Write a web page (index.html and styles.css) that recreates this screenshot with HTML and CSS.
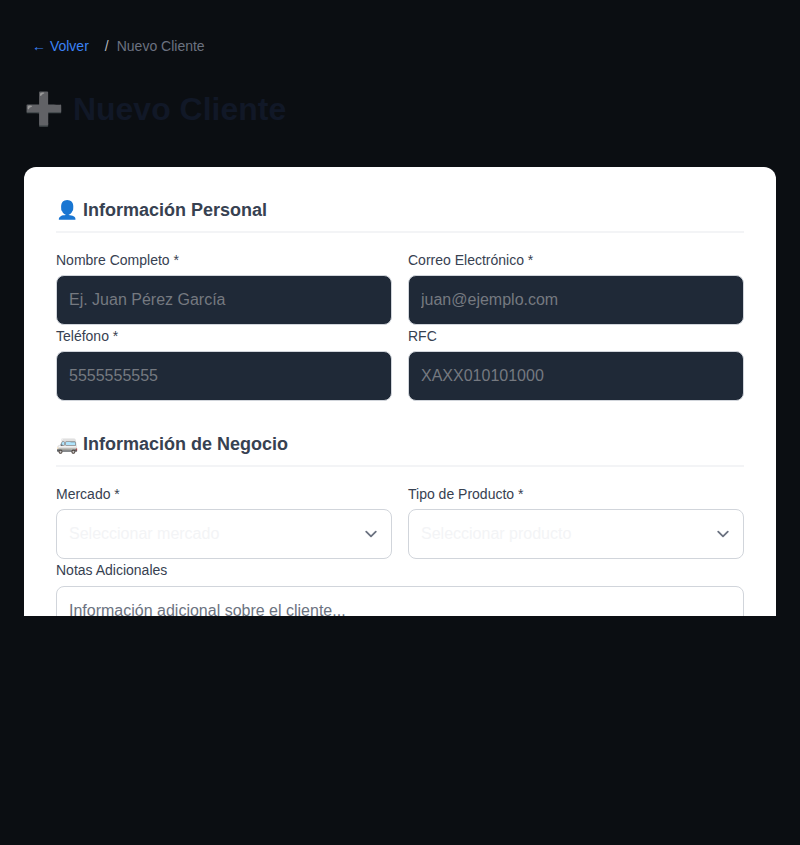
FILE: index.html
```html
<!DOCTYPE html>
<html lang="es">
<head>
<meta charset="utf-8">
<title>Nuevo Cliente</title>
<link rel="stylesheet" href="styles.css">
</head>
<body>
<main class="page">
  <nav class="crumbs"><a class="back">← Volver</a><span class="sep">/</span><span class="current">Nuevo Cliente</span></nav>
  <h1 class="title">➕ Nuevo Cliente</h1>
  <form class="card">
    <section class="section">
      <h2 class="heading">👤 Información Personal</h2>
      <div class="grid">
        <label class="field">Nombre Completo *<input class="control dark" placeholder="Ej. Juan Pérez García"></label>
        <label class="field">Correo Electrónico *<input class="control dark" placeholder="juan@ejemplo.com"></label>
        <label class="field">Teléfono *<input class="control dark" placeholder="5555555555"></label>
        <label class="field">RFC<input class="control dark" placeholder="XAXX010101000"></label>
      </div>
    </section>
    <section class="section">
      <h2 class="heading">🚐 Información de Negocio</h2>
      <div class="grid">
        <div class="field">Mercado *<div class="control select"><span>Seleccionar mercado</span><svg class="chevron" viewBox="0 0 20 20"><path d="M6 8l4 4 4-4"/></svg></div></div>
        <div class="field">Tipo de Producto *<div class="control select"><span>Seleccionar producto</span><svg class="chevron" viewBox="0 0 20 20"><path d="M6 8l4 4 4-4"/></svg></div></div>
        <label class="field wide">Notas Adicionales<textarea class="control notes" placeholder="Información adicional sobre el cliente..."></textarea></label>
      </div>
    </section>
  </form>
</main>
</body>
</html>
```
FILE: styles.css
```css
* { box-sizing: border-box; }
body {
  height: 845px;
  margin: 0;
  overflow: hidden;
  background: #0b0e12;
  font-family: "Liberation Sans", Arial, sans-serif;
}
.page { height: 616px; padding: 24px 24px 0; overflow: hidden; }
.crumbs { display: flex; align-items: center; height: 44px; padding-left: 8px; font-size: 14px; color: #9ca3af; }
.back { color: #3b82f6; }
.sep { margin: 0 8px 0 16px; color: #b4b8bf; }
.current { color: #6b7280; }
.title { height: 40px; margin: 21px 0 38px; font-size: 32px; line-height: 40px; color: #111827; }
.card { height: 700px; padding: 32px; border-radius: 12px; background: #fff; }
.section { margin-bottom: 32px; }
.heading { height: 34px; margin: 0 0 16px; border-bottom: 2px solid #f3f4f6; font-size: 18px; line-height: 22px; color: #374151; }
.grid { display: grid; grid-template-columns: 1fr 1fr; column-gap: 16px; }
.field { display: block; height: 76px; padding-top: 1px; font-size: 14px; line-height: 20px; color: #374151; }
.wide { grid-column: 1 / -1; }
.control { display: block; width: 100%; height: 50px; margin-top: 5px; padding: 0 12px; border: 1px solid #d1d5db; border-radius: 8px; font-family: inherit; font-size: 16px; background: #fff; }
.dark { background: #1f2937; }
.control::placeholder { color: #757980; opacity: 1; }
.select { display: flex; align-items: center; justify-content: space-between; padding-right: 8px; color: #f3f4f6; }
.chevron { width: 24px; height: 24px; fill: none; stroke: #6b7280; stroke-width: 1.5; stroke-linecap: round; stroke-linejoin: round; }
.notes { height: 100px; margin-top: 6px; padding-top: 15px; resize: none; }
.notes::placeholder { color: #6b7280; }
```
